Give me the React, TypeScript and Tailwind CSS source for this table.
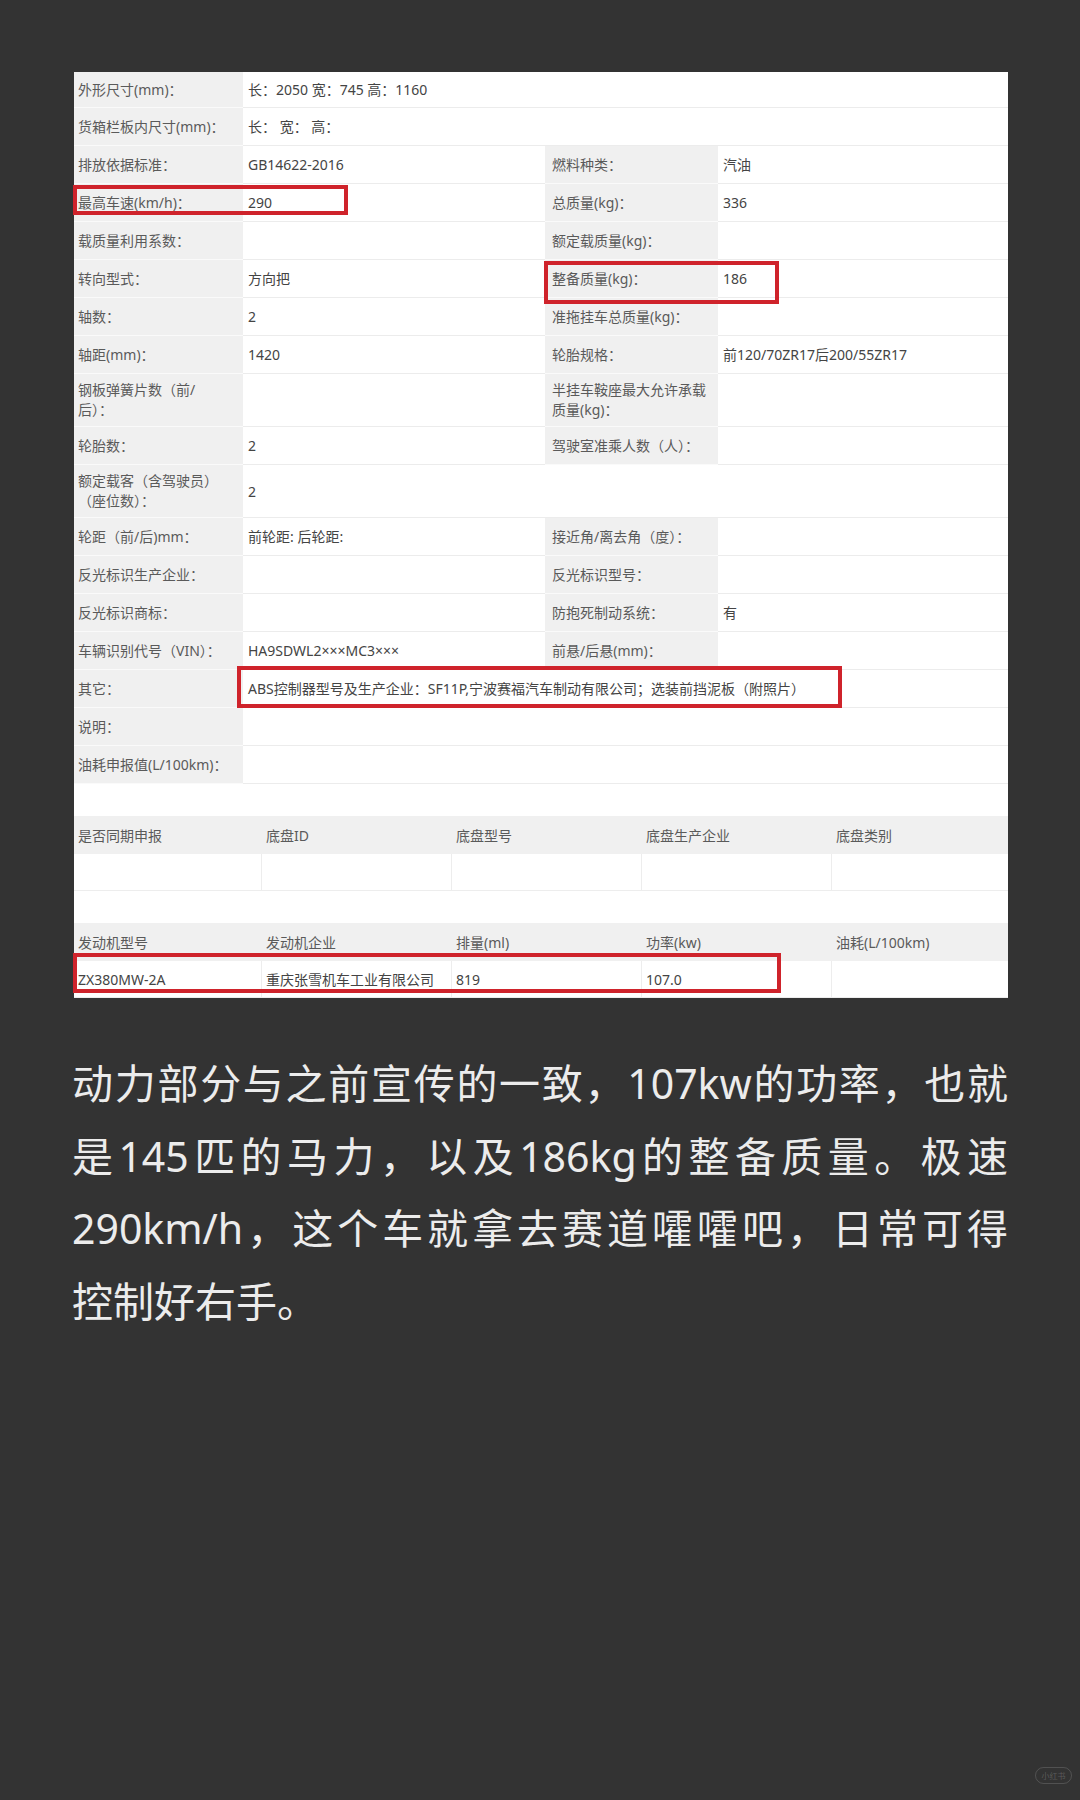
const font = { fontFamily: '"Noto Sans", "Noto Sans CJK SC", sans-serif' };

type Row = {
    label: string;
    value?: string;
    label2?: string;
    value2?: string;
    tall?: boolean;
    first?: boolean;
};

const rows: Row[] = [
    { label: "外形尺寸(mm)：", value: "长：2050 宽：745 高：1160", first: true },
    { label: "货箱栏板内尺寸(mm)：", value: "长： 宽： 高：" },
    { label: "排放依据标准：", value: "GB14622-2016", label2: "燃料种类：", value2: "汽油" },
    { label: "最高车速(km/h)：", value: "290", label2: "总质量(kg)：", value2: "336" },
    { label: "载质量利用系数：", value: "", label2: "额定载质量(kg)：", value2: "" },
    { label: "转向型式：", value: "方向把", label2: "整备质量(kg)：", value2: "186" },
    { label: "轴数：", value: "2", label2: "准拖挂车总质量(kg)：", value2: "" },
    { label: "轴距(mm)：", value: "1420", label2: "轮胎规格：", value2: "前120/70ZR17后200/55ZR17" },
    { label: "钢板弹簧片数（前/\n后）：", value: "", label2: "半挂车鞍座最大允许承载\n质量(kg)：", value2: "", tall: true },
    { label: "轮胎数：", value: "2", label2: "驾驶室准乘人数（人）：", value2: "" },
    { label: "额定载客（含驾驶员）\n（座位数）：", value: "2", tall: true },
    { label: "轮距（前/后)mm：", value: "前轮距: 后轮距:", label2: "接近角/离去角（度）：", value2: "" },
    { label: "反光标识生产企业：", value: "", label2: "反光标识型号：", value2: "" },
    { label: "反光标识商标：", value: "", label2: "防抱死制动系统：", value2: "有" },
    { label: "车辆识别代号（VIN）：", value: "HA9SDWL2×××MC3×××", label2: "前悬/后悬(mm)：", value2: "" },
    { label: "其它：", value: "ABS控制器型号及生产企业：SF11P,宁波赛福汽车制动有限公司；选装前挡泥板（附照片）" },
    { label: "说明：", value: "" },
    { label: "油耗申报值(L/100km)：", value: "" },
];

const chassisHead = ["是否同期申报", "底盘ID", "底盘型号", "底盘生产企业", "底盘类别"];
const engineHead = ["发动机型号", "发动机企业", "排量(ml)", "功率(kw)", "油耗(L/100km)"];
const engineRow = ["ZX380MW-2A", "重庆张雪机车工业有限公司", "819", "107.0", ""];

const lines = [
    "动力部分与之前宣传的一致，107kw的功率，也就",
    "是145匹的马力，以及186kg的整备质量。极速",
    "290km/h，这个车就拿去赛道嚯嚯吧，日常可得",
];

function SpecRow({ row }: { row: Row }) {
    const h = row.first ? "h-[36px]" : row.tall ? "h-[53px]" : "h-[38px]";
    return (
        <div className={`grid grid-cols-[169px_302px_173px_1fr] ${h}`}>
            <div className="flex items-center whitespace-pre-line border-b border-[#fafafa] bg-[#f0f0f0] pl-[4px] leading-[20px] text-[#5a5a5a]">{row.label}</div>
            {row.label2 === undefined ? (
                <div className="col-span-3 flex items-center border-b border-[#ececec] pl-[5px] text-[#444]">{row.value}</div>
            ) : (
                <>
                    <div className="flex items-center border-b border-[#ececec] pl-[5px] text-[#444]">{row.value}</div>
                    <div className="flex items-center whitespace-pre-line border-b border-[#fafafa] bg-[#f0f0f0] pl-[7px] leading-[20px] text-[#5a5a5a]">{row.label2}</div>
                    <div className="flex items-center border-b border-[#ececec] pl-[5px] text-[#444]">{row.value2}</div>
                </>
            )}
        </div>
    );
}

function FiveCols({ cells, head, h }: { cells: string[]; head?: boolean; h: string }) {
    return (
        <div className={`grid grid-cols-[188px_190px_190px_190px_1fr] ${h} ${head ? "bg-[#f0f0f0] text-[#5a5a5a]" : "bg-white text-[#444]"}`}>
            {cells.map((c, i) => (
                <div key={i} className={`flex items-center pl-[4px] ${!head && i < 4 ? "border-r border-[#ededed]" : ""} ${!head ? "border-b border-[#ededed]" : ""}`}>
                    {c}
                </div>
            ))}
        </div>
    );
}

function Box({ className }: { className: string }) {
    return <div className={`pointer-events-none absolute border-[4px] border-[#cf232b] ${className}`} />;
}

export default function App() {
    return (
        <div className="min-h-[1800px] w-[1080px] bg-[#333333]" style={font}>
            <div className="pl-[74px] pr-[72px] pt-[72px]">
                {/* spec sheet screenshot */}
                <div className="relative w-[934px] bg-white text-[14px]">
                    {rows.map((r) => (
                        <SpecRow key={r.label} row={r} />
                    ))}

                    <div className="h-[32px]" />
                    <FiveCols cells={chassisHead} head h="h-[38px]" />
                    <FiveCols cells={["", "", "", "", ""]} h="h-[37px]" />
                    <div className="h-[32px]" />
                    <FiveCols cells={engineHead} head h="h-[38px]" />
                    <FiveCols cells={engineRow} h="h-[37px]" />

                    <Box className="left-[-1px] top-[113px] h-[30px] w-[275px]" />
                    <Box className="left-[470px] top-[189px] h-[43px] w-[235px]" />
                    <Box className="left-[163px] top-[594px] h-[42px] w-[605px]" />
                    <Box className="left-[-1px] top-[881px] h-[40px] w-[708px]" />
                </div>
            </div>

            <div className="mt-[49px] w-[1008px] pl-[72px] text-[41px] leading-[72.5px] text-[#ececec]">
                {lines.map((l) => (
                    <div key={l} className="text-justify [text-align-last:justify]">
                        {l}
                    </div>
                ))}
                <div>控制好右手。</div>
            </div>

            <div className="relative">
                <div className="absolute left-[1035px] top-[430px] flex h-[17px] w-[37px] items-center justify-center rounded-full border border-white/15 text-[8px] text-white/20">
                    小红书
                </div>
            </div>
        </div>
    );
}
